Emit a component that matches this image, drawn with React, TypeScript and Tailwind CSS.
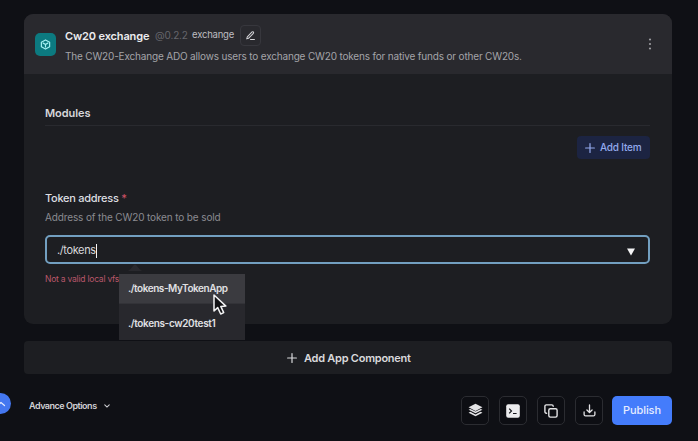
import type { ReactNode } from "react";

function Plus({ className }: { className: string }) {
  return (
    <svg viewBox="0 0 10 10" className={className} fill="none" stroke="currentColor" strokeWidth="1.2" strokeLinecap="round">
      <path d="M5 .6v8.8M.6 5h8.8" />
    </svg>
  );
}

function IconButton({ children }: { children: ReactNode }) {
  return (
    <button className="flex h-[29px] w-7 items-center justify-center rounded-[5px] border border-[#2b2c31] bg-[#0d0e13] text-[#e4e4e6]">
      {children}
    </button>
  );
}

function Header() {
  return (
    <header className="flex h-[60px] shrink-0 items-center rounded-t-[9px] bg-[#29292e] pr-[17px] pl-[11px]">
      <div className="flex h-[23px] w-[21px] shrink-0 items-center justify-center rounded-[5px] bg-[#0c7a80] text-[#a5f0f2]">
        <svg viewBox="0 0 24 24" className="size-[11px]" fill="none" stroke="currentColor" strokeWidth="2.6" strokeLinejoin="round" strokeLinecap="round">
          <path d="M12 2l9 5v10l-9 5-9-5V7z" />
          <path d="M7 9l5 3 5-3M12 12v5.5" />
        </svg>
      </div>
      <div className="ml-[9px] flex flex-1 flex-col pt-[2px] whitespace-nowrap">
        <div className="flex h-[22px] items-center">
          <h1 className="w-[90px] pt-[2px] text-[11px] font-semibold tracking-[-0.14px] text-[#ececee]">Cw20 exchange</h1>
          <span className="w-[37px] pt-px text-[10px] tracking-[-0.15px] text-[#66666c]">@0.2.2</span>
          <span className="w-[48px] pt-px text-[9.5px] tracking-[-0.2px] text-[#bdbdc1]">exchange</span>
          <button className="flex size-[21px] items-center justify-center rounded-[4px] border border-[#37373d] text-[#d4d4d8]">
            <svg viewBox="0 0 12 12" className="size-[11px]" fill="none" stroke="currentColor" strokeWidth="1.1" strokeLinejoin="round" strokeLinecap="round">
              <path d="M2.5 7.4 7.7 2.1Q8.4 1.5 9.1 2.1T9.1 3.7L3.8 9.1 1.9 9.7zM6 10.3h4.3" />
            </svg>
          </button>
        </div>
        <p className="h-5 text-[10px] leading-5 tracking-[-0.174px] text-[#a4a4a9]">
          The CW20-Exchange ADO allows users to exchange CW20 tokens for native funds or other CW20s.
        </p>
      </div>
      <svg viewBox="0 0 10 12" className="h-3 w-[10px]" fill="#9c9ca1">
        <circle cx="5" cy="1.5" r="1.1" />
        <circle cx="5" cy="6" r="1.1" />
        <circle cx="5" cy="10.5" r="1.1" />
      </svg>
    </header>
  );
}

function Suggestions() {
  return (
    <div className="absolute top-[30px] left-[74px] z-10 w-[126px] text-[10px] font-semibold text-[#e0e0e3]">
      <svg viewBox="0 0 16 8" className="absolute -top-0.5 left-2 h-2 w-4" fill="#29292e">
        <path d="M1 8Q4 6 6 3Q8 0 10 3Q12 6 15 8z" />
      </svg>
      <ul className="mt-[9px] bg-[#28282d] whitespace-nowrap">
        <li className="flex h-[30px] items-center border-b border-[#333338] bg-[#3b3b40] pl-[9px] tracking-[-0.45px]">./tokens-MyTokenApp</li>
        <li className="flex h-9 items-center pt-[2px] pl-[9px] tracking-[-0.36px]">./tokens-cw20test1</li>
      </ul>
      <svg viewBox="0 0 16 23" className="absolute top-[28px] left-[93px] h-[23px] w-4" fill="#111114" stroke="#f4f4f5" strokeWidth="1.5" strokeLinejoin="round">
        <path d="M2 2v16l3.7-3.4 3 6.4 3-1.4-2.9-6.2 5.1-.3z" />
      </svg>
    </div>
  );
}

export default function App() {
  return (
    <div className="relative flex h-[441px] w-[698px] flex-col overflow-hidden bg-[#0f1015] pt-[14px] pr-[26px] pl-6 font-['Inter',sans-serif]">
      <section className="flex h-[310px] shrink-0 flex-col rounded-[9px] bg-[#1d1e22]">
        <Header />
        <div className="flex flex-col pr-[22px] pl-[21px] pt-[30px]">
          <h2 className="h-[22px] border-b border-[#292a2f] text-[11px] leading-[19px] font-semibold tracking-[-0.05px] text-[#d7d7da]">Modules</h2>
          <button className="mt-[10px] flex h-[23px] w-[73px] items-center self-end rounded-[4px] bg-[#1c2442] pl-[8px] text-[#93a9ed]">
            <Plus className="size-[10px]" />
            <span className="ml-[5px] text-[10px] font-medium tracking-[-0.2px] whitespace-nowrap">Add Item</span>
          </button>
          <label className="mt-[30px] h-[19px] text-[11px] leading-[19px] font-medium tracking-[-0.27px] text-[#dedee1]">
            Token address <span className="text-[#c95062]">*</span>
          </label>
          <p className="h-[19px] text-[10px] leading-[19px] tracking-[-0.13px] text-[#8b8b91]">Address of the CW20 token to be sold</p>
          <div className="relative mt-[8px]">
            <div className="flex h-[29px] items-center justify-between rounded-[5px] border-2 border-[#729fc0] pr-[13px] pl-[10px]">
              <span className="flex items-center pt-[2px] text-[11px] tracking-[-0.38px] text-[#d8d8db]">
                ./tokens<span className="h-[14px] w-px bg-[#f4f4f5]" />
              </span>
              <svg viewBox="0 0 8 8" className="mt-[5px] size-2" fill="#f4f4f5">
                <path d="M0 .5h8L4 7.5z" />
              </svg>
            </div>
            <Suggestions />
          </div>
          <p className="mt-[7px] h-4 text-[8.5px] leading-4 tracking-[-0.22px] whitespace-nowrap text-[#b9576a]">Not a valid local vfs</p>
        </div>
      </section>
      <button className="mt-[17px] flex h-[33px] shrink-0 items-center rounded-[4px] bg-[#1d1e22] pl-[263px] text-[#d9d9dc]">
        <Plus className="size-[10px]" />
        <span className="ml-[7px] pt-px text-[11px] font-semibold tracking-[-0.25px] whitespace-nowrap">Add App Component</span>
      </button>
      <footer className="mt-[22px] flex h-[29px] items-center">
        <button className="-mt-[9px] ml-[5px] flex items-center text-[9px] font-semibold tracking-[-0.48px] text-[#cfcfd3]">
          Advance Options
          <svg viewBox="0 0 8 8" className="ml-[7px] size-[6px]" fill="none" stroke="currentColor" strokeWidth="1.4" strokeLinecap="round">
            <path d="M1 2.5l3 3 3-3" />
          </svg>
        </button>
        <div className="ml-auto flex gap-[10px]">
          <IconButton>
            <svg viewBox="0 0 16 16" className="size-[15px]" fill="currentColor">
              <path d="M8 .8 15.4 4.6 8 8.4.6 4.6z" />
              <path d="M.6 7.2 2.5 6.3 8 9.1l5.5-2.8 1.9.9L8 11z" />
              <path d="M.6 10.3l1.9-.9L8 12.2l5.5-2.8 1.9.9L8 14.1z" />
            </svg>
          </IconButton>
          <IconButton>
            <svg viewBox="0 0 14 14" className="size-[14px]">
              <rect x=".2" y=".2" width="13.6" height="13.6" rx="2" fill="#ececee" />
              <path d="M3.2 4.6 5.5 7 3.2 9.4M7 9.5h3.6" fill="none" stroke="#15161b" strokeWidth="1.2" />
            </svg>
          </IconButton>
          <IconButton>
            <svg viewBox="0 0 14 14" className="size-[14px]" fill="none" stroke="currentColor" strokeWidth="1.4" strokeLinecap="round" strokeLinejoin="round">
              <rect x="4.8" y="4.8" width="8.3" height="8.3" rx="1.5" />
              <path d="M2.6 9.2H2.3A1.4 1.4 0 0 1 .9 7.8V2.3A1.4 1.4 0 0 1 2.3.9h5.5a1.4 1.4 0 0 1 1.4 1.4" />
            </svg>
          </IconButton>
          <IconButton>
            <svg viewBox="0 0 14 14" className="size-[13px]" fill="none" stroke="currentColor" strokeWidth="1.4" strokeLinecap="round" strokeLinejoin="round">
              <path d="M7 1v8M4.2 6.4 7 9.2l2.8-2.8M1.2 8.5v2.7A1.6 1.6 0 0 0 2.8 12.8h8.4a1.6 1.6 0 0 0 1.6-1.6V8.5" />
            </svg>
          </IconButton>
        </div>
        <button className="ml-[9px] h-[29px] w-[60px] rounded-[5px] bg-[#447cfb] text-[11px] font-medium tracking-[-0.1px] text-[#e5ecff]">Publish</button>
      </footer>
      <div className="absolute top-[393px] -left-[10px] flex size-[21px] items-center justify-center rounded-full bg-[#4477f0] text-[#e5ecff]">
        <svg viewBox="0 0 10 10" className="size-[10px]" fill="none" stroke="currentColor" strokeWidth="1.2" strokeLinecap="round">
          <path d="M1.5 6.5 5 3.5l3.5 3" />
        </svg>
      </div>
    </div>
  );
}
